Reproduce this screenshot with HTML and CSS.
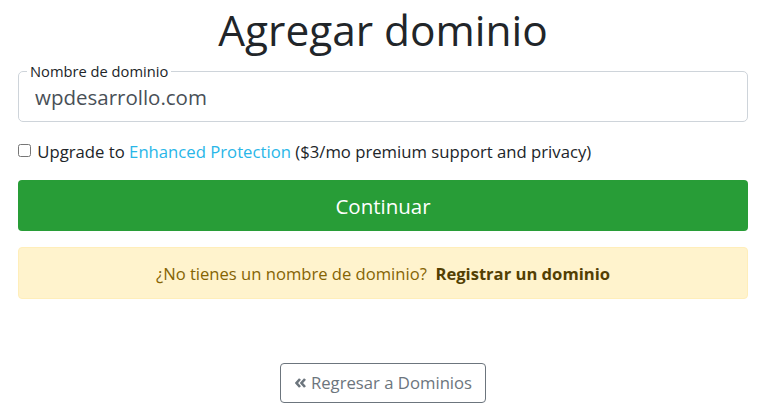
FILE: index.html
```html
<!DOCTYPE html>
<html>
<head>
  <title>Agregar dominio</title>
  <link rel="stylesheet" href="styles.css">
</head>
<body>
  <div class="container">
    <h1>Agregar dominio</h1>

    <fieldset class="domain-field">
      <legend>Nombre de dominio</legend>
      <input type="text" class="domain-input" value="wpdesarrollo.com">
    </fieldset>

    <div class="upgrade">
      <input type="checkbox" id="upgrade">
      <label for="upgrade">Upgrade to <a href="#">Enhanced Protection</a> ($3/mo premium support and privacy)</label>
    </div>

    <button class="btn-continue">Continuar</button>

    <div class="alert">
      ¿No tienes un nombre de dominio?&nbsp; <a href="#">Registrar un dominio</a>
    </div>

    <div class="back">
      <a href="#" class="btn-back">
        <svg width="11" height="10" viewBox="0 0 11 10">
          <path d="M5 1 L1.5 5 L5 9 M10 1 L6.5 5 L10 9" fill="none" stroke="#6c757d" stroke-width="2.6"/>
        </svg>
        <span>Regresar a Dominios</span>
      </a>
    </div>
  </div>
</body>
</html>
```

FILE: styles.css
```css
body {
  margin: 0;
  font-family: "Open Sans", "Noto Sans", sans-serif;
  color: #212529;
  background-color: #fff;
}

.container {
  padding: 0 20px 0 18px;
}

h1 {
  text-align: center;
  font-weight: 400;
  font-size: 42.4px;
  line-height: 1.2;
  margin: 5px 0 8px;
}

.domain-field {
  border: 1px solid #ced4da;
  border-radius: 5px;
  margin: 0;
  padding: 0 0 0 12px;
}

.domain-field legend {
  font-size: 14.7px;
  padding: 0 3px;
  margin-left: -4px;
  line-height: 1;
  color: #212529;
}

.domain-input {
  display: block;
  border: none;
  outline: none;
  font-family: inherit;
  font-size: 20.5px;
  color: #495057;
  padding: 0 4px;
  height: 30px;
  margin: 3px 0 9px;
  width: 90%;
}

.upgrade {
  font-size: 16.7px;
  margin: 18px 0 16px;
  line-height: 24px;
  white-space: nowrap;
}

.upgrade input {
  margin: 0 2px 0 0;
  width: 13px;
  height: 13px;
  vertical-align: 1px;
}

.upgrade a {
  color: #29b6e8;
  text-decoration: none;
}

.btn-continue {
  display: block;
  width: 100%;
  height: 51px;
  padding-top: 3px;
  border: none;
  border-radius: 4px;
  background-color: #289d37;
  color: #fff;
  font-family: inherit;
  font-size: 20.5px;
}

.alert {
  margin-top: 16px;
  height: 52px;
  box-sizing: border-box;
  padding-top: 14px;
  text-align: center;
  background-color: #fff3cd;
  border: 1px solid #ffeeba;
  border-radius: 4px;
  color: #856404;
  font-size: 16.6px;
  white-space: nowrap;
}

.alert a {
  color: #533f03;
  font-weight: 700;
  text-decoration: none;
}

.back {
  text-align: center;
  margin-top: 64px;
}

.btn-back {
  display: inline-flex;
  align-items: center;
  gap: 5px;
  height: 40px;
  box-sizing: border-box;
  padding: 0 13px 0 14px;
  border: 1px solid #6c757d;
  border-radius: 4px;
  color: #6c757d;
  text-decoration: none;
  font-size: 16.7px;
}
```
